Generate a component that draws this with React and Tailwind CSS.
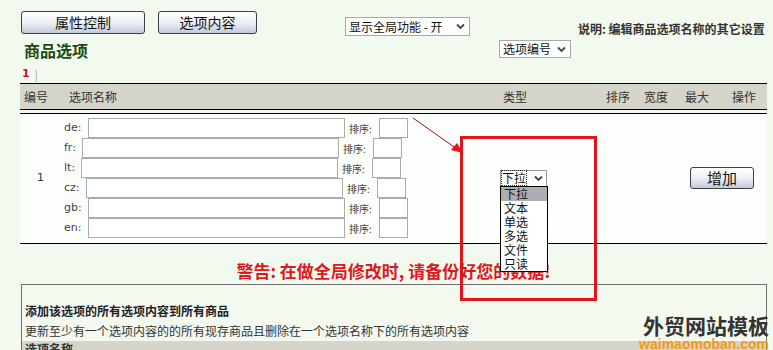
import React from 'react';

const cjk = { fontFamily: '"Noto Sans CJK SC", "DejaVu Sans", sans-serif' };

const langs = [
  { code: 'de', lw: 'w-[24px]' },
  { code: 'fr', lw: 'w-[18px]' },
  { code: 'lt', lw: 'w-[17px]' },
  { code: 'cz', lw: 'w-[22px]' },
  { code: 'gb', lw: 'w-[24px]' },
  { code: 'en', lw: 'w-[24px]' },
];

const typeOptions = ['下拉', '文本', '单选', '多选', '文件', '只读'];

function GradButton({ children, className }) {
  return (
    <div
      className={`flex items-center justify-center rounded-[3px] border border-[#3a3f4a] bg-gradient-to-b from-white via-[#eef0f6] to-[#c3c9da] text-[14px] text-[#111] ${className}`}
    >
      {children}
    </div>
  );
}

function Chevron() {
  return (
    <svg width="9" height="7" viewBox="0 0 9 7" className="shrink-0">
      <path d="M1 1.5 L4.5 5 L8 1.5" fill="none" stroke="#444" strokeWidth="1.8" />
    </svg>
  );
}

function FakeSelect({ label, className }) {
  return (
    <div
      className={`flex items-center justify-between border border-[#a8a8a8] bg-white pl-[3px] pr-[4px] text-[12px] text-[#111] ${className}`}
    >
      <span>{label}</span>
      <Chevron />
    </div>
  );
}

export default function App() {
  return (
    <div className="relative h-[350px] w-[773px] overflow-hidden bg-[#f2f9ee]" style={cjk}>
      {/* top bar */}
      <div className="flex h-[40px] items-start pl-[21px] pt-[11px]">
        <GradButton className="h-[23px] w-[124px]">属性控制</GradButton>
        <GradButton className="ml-[13px] h-[23px] w-[99px]">选项内容</GradButton>
        <FakeSelect label="显示全局功能 - 开" className="ml-[88px] mt-[6px] h-[19px] w-[125px]" />
        <div className="ml-[108px] mt-[9px] text-[12px] font-bold text-[#333]">说明: 编辑商品选项名称的其它设置</div>
      </div>

      <div className="flex h-[24px] items-start">
        <div className="ml-[24px] w-[475px] text-[16px] font-bold leading-[21px] text-[#1d4a10]">商品选项</div>
        <FakeSelect label="选项编号" className="h-[18px] w-[72px]" />
      </div>

      <div className="ml-[22px] flex h-[19px] items-center text-[11px] leading-[14px]">
        <span className="font-bold text-[#d0112b]" style={{ fontFamily: '"DejaVu Sans", sans-serif' }}>1</span>
        <span className="ml-[5px] text-[#999]">|</span>
      </div>

      {/* table */}
      <div className="ml-[20px] w-[747px]">
        <div className="border-t border-black" />
        <div className="flex h-[25px] items-center bg-[#d6d5cb] pl-[4px] text-[12px] text-[#333]">
          <div className="w-[45px]">编号</div>
          <div className="w-[434px]">选项名称</div>
          <div className="w-[103px]">类型</div>
          <div className="w-[38px]">排序</div>
          <div className="w-[41px]">宽度</div>
          <div className="w-[47px]">最大</div>
          <div>操作</div>
        </div>
        <div className="h-[5px] border-y border-black" />

        <div className="flex h-[129px] items-center bg-[#fcfefb] pb-[1px]">
          <div className="w-[44px] pl-[17px] text-[11px] text-[#333]" style={{ fontFamily: '"DejaVu Sans", sans-serif' }}>1</div>
          <div className="w-[436px]">
            {langs.map((l) => (
              <div key={l.code} className="flex h-[20px] items-center">
                <span
                  className={`${l.lw} text-[11px] text-[#444]`}
                  style={{ fontFamily: '"DejaVu Sans", sans-serif' }}
                >
                  {l.code}:
                </span>
                <div className="h-[20px] w-[257px] border border-[#a9abad] bg-white" />
                <span className="ml-[4px] w-[30px] text-[10px] text-[#444]">排序:</span>
                <div className="h-[20px] w-[29px] border border-[#a9abad] bg-white" />
              </div>
            ))}
          </div>
          <div className="relative">
            <div className="flex h-[17px] w-[47px] items-center justify-between border border-[#9a9a9a] bg-white pl-[1px] pr-[3px] text-[12px] leading-[14px] text-[#111]">
              <span className="outline-1 outline-dotted outline-[#333]">下拉</span>
              <Chevron />
            </div>
            <div className="absolute left-0 top-[16px] z-10 w-[48px] border border-black bg-white text-[12px] leading-[14px] text-[#111]">
              {typeOptions.map((o, i) => (
                <div key={o} className={`h-[14px] pl-[3px] ${i === 0 ? 'bg-[#adadb4]' : ''}`}>
                  {o}
                </div>
              ))}
            </div>
          </div>
          <GradButton className="ml-[143px] h-[22px] w-[64px] text-[15px]">增加</GradButton>
        </div>
        <div className="border-t border-black" />

        <div className="flex h-[40px] items-center justify-center pt-[13px] text-[17px] font-bold text-[#e0181b]">
          警告: 在做全局修改时, 请备份好您的数据!
        </div>
      </div>

      {/* bottom box */}
      <div className="ml-[21px] w-[746px] border-l border-t border-r border-[#6f6f6f] bg-[#f4f9f0]">
        <div className="pl-[3px] pt-[16px] text-[12px] font-bold leading-[20px] text-[#222]">添加该选项的所有选项内容到所有商品</div>
        <div className="pl-[3px] text-[12px] leading-[20px] text-[#333]">更新至少有一个选项内容的的所有现存商品且删除在一个选项名称下的所有选项内容</div>
        <div className="h-[20px] bg-[#d6d5cb] pl-[3px] text-[12px] font-bold leading-[16px] text-[#333]">选项名称</div>
      </div>

      {/* annotation overlays */}
      <svg className="pointer-events-none absolute left-0 top-0" width="773" height="350">
        <line x1="413" y1="118" x2="457" y2="149" stroke="#9b1020" strokeWidth="1" />
        <polygon points="463,153 451,150 457,143" fill="#e0141b" />
      </svg>
      <div className="pointer-events-none absolute left-[460px] top-[136px] h-[165px] w-[137px] border-[3px] border-[#e0141b]" />

      {/* watermark */}
      <div className="absolute right-[4px] top-[313px] flex flex-col items-end">
        <div className="text-[21px] font-bold leading-[25px] text-[#333]">外贸网站模板</div>
        <div className="text-[14px] font-bold leading-[13px] text-[#f39a12]" style={{ fontFamily: '"Liberation Sans", sans-serif' }}>waimaomoban.com</div>
      </div>
    </div>
  );
}
